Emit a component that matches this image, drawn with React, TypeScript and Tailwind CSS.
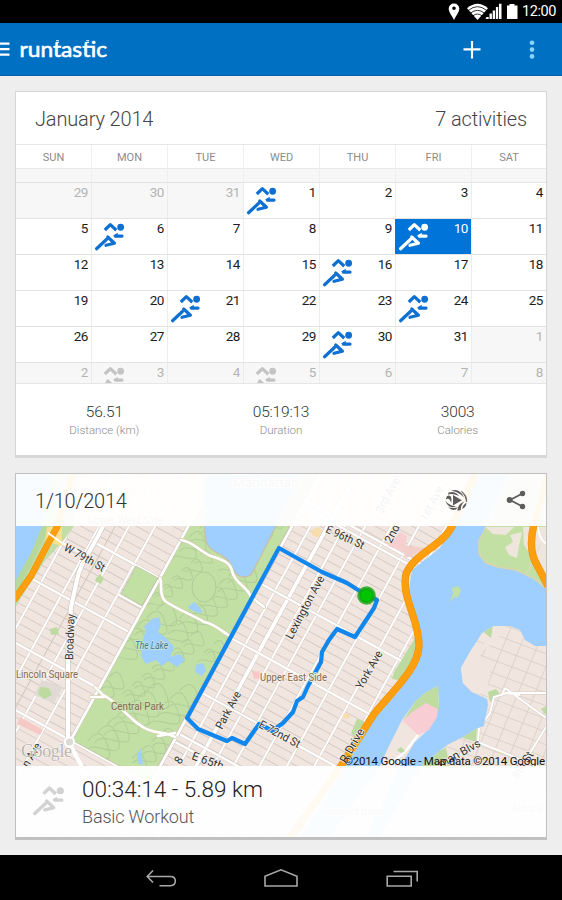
import React from "react";

const DAY_NAMES = ["SUN", "MON", "TUE", "WED", "THU", "FRI", "SAT"];

type Day = { n: number; out?: boolean; run?: boolean; selected?: boolean };

const RUN_DAYS = [1, 6, 10, 16, 21, 24, 30];

const DAYS: Day[] = Array.from({ length: 42 }, (_, i) => {
  const d = i - 2;
  if (d < 1) return { n: 31 + d, out: true };
  if (d > 31) return { n: d - 31, out: true, run: d === 34 || d === 36 };
  return { n: d, run: RUN_DAYS.includes(d), selected: d === 10 };
});

const WEEKS = [0, 1, 2, 3, 4, 5].map((w) => DAYS.slice(w * 7, w * 7 + 7));

function Runner({ className }: { className?: string }) {
  return (
    <svg viewBox="1 0.500 33 33" className={className} fill="none" stroke="currentColor" strokeWidth="3.1" strokeLinecap="round" strokeLinejoin="round">
      <circle cx="28.8" cy="8.5" r="3.3" fill="currentColor" stroke="none" />
      <path d="M13.400 11.200L18.800 6L24.600 11.400" strokeLinecap="butt" />
      <path d="M23.600 17.100H30.200" strokeWidth="3" />
      <path d="M26 13.800L21.400 16.800L26 18.500Z" fill="currentColor" stroke="none" />
      <path d="M5.400 29.400L15 20.400" />
      <path d="M16.200 18L22.800 24L14.600 26" />
    </svg>
  );
}

function StatusBar() {
  return (
    <div className="flex h-[23px] items-center justify-end bg-black pr-[5px] text-white">
      <svg width="70" height="18" viewBox="448 3 70 18" fill="currentColor">
        <path fillRule="evenodd" d="M454 3.4a5.2 5.2 0 0 0-5.3 5.2c0 3.8 3.5 7.4 5.3 11.4 1.8-4 5.3-7.6 5.3-11.4A5.2 5.2 0 0 0 454 3.4Zm0 3a1.8 1.8 0 1 1 0 3.6 1.8 1.8 0 0 1 0-3.6Z" />
        <path d="M467 8.2Q477.500 -.8 488 8.200L477.500 20Z" />
        <g stroke="#000" strokeWidth="0.800" fill="none">
          <path d="M468.500 10.300Q477.500 3 486.500 10.300" />
          <path d="M470.500 13.100Q477.500 7.600 484.500 13.100" />
          <path d="M473 15.800Q477.500 12.200 482 15.800" />
        </g>
        <path d="M486.500 17h2.200v2H485.500ZM489.500 13.500h2.400V19h-2.400ZM492.700 10.500h2.400V19h-2.400ZM495.900 7h2.300V19h-2.300ZM499 3.800h2.500V19H499Z" />
        <path d="M507 5.500h2.500V4h5v1.500h3V19H507Z" />
      </svg>
      <span className="ml-[4px] w-[35px] whitespace-nowrap pt-[1px] text-[14.500px] leading-[22px] tracking-[-0.400px]">12:00</span>
    </div>
  );
}

function AppBar() {
  return (
    <header className="flex h-[53px] items-center border-b border-[#0a5fa6] bg-[#0070c3] text-white">
      <svg width="10" height="16" viewBox="0 0 10 16" fill="#fff">
        <path d="M0 1.500h9.500v2.200H0ZM0 7h9.500v2.200H0ZM0 12.500h9.500v2.200H0Z" />
      </svg>
      <svg width="98" height="28" viewBox="10 36 98 28" fill="#fff">
        <text x="19.500" y="58.300" textLength="87.500" lengthAdjust="spacingAndGlyphs" fontFamily="Lato, sans-serif" fontSize="21" stroke="#fff" strokeWidth="0.600">runtastic</text>
        <path d="M56 41.200h3v1h-3ZM55.800 43h3v1h-3ZM86.200 41.200h3v1h-3ZM86 43h3v1h-3Z" />
      </svg>
      <div className="flex-1" />
      <svg width="90" height="30" viewBox="460 35 90 30">
        <path d="M463.500 50.400h17M472 42v17.500" stroke="#fff" strokeWidth="2.100" />
        <g fill="#8ad4fa">
          <circle cx="532" cy="43.800" r="2.300" />
          <circle cx="532" cy="50.600" r="2.300" />
          <circle cx="532" cy="57.400" r="2.300" />
        </g>
      </svg>
      <div className="w-3" />
    </header>
  );
}

function DayCell({ day, last }: { day: Day; last: boolean }) {
  const tone = day.selected
    ? "-ml-px pl-px bg-[#0074d9] text-white"
    : day.out
      ? "bg-[#f7f7f7] text-[#b4b4b4]"
      : "bg-white text-[#1c1c1c]";
  const icon = day.selected ? "text-white" : day.out ? "text-[#c4c4c4]" : "text-[#0f70d2]";
  return (
    <div className={`flex h-full justify-between ${last ? "pr-[3px]" : "border-r border-[#ececec] pr-[3px]"} ${tone}`}>
      <div className="h-[34px] w-[34px]">{day.run && <Runner className={`h-[34px] w-[34px] ${icon}`} />}</div>
      <span className="text-[13.500px] leading-[19px] tracking-[-0.400px]">{day.n}</span>
    </div>
  );
}

const COLS = "grid grid-cols-[76px_76px_76px_76px_76px_76px_74px]";

function CalendarCard() {
  const stats = [
    ["56.51", "Distance (km)"],
    ["05:19:13", "Duration"],
    ["3003", "Calories"],
  ];
  return (
    <section className="h-[367px] border border-b-[3px] border-[#d6d6d6] bg-white">
      <div className="flex h-[52px] items-center justify-between px-[19px] pt-[2px] text-[20px] font-light tracking-[-0.150px] text-[#444]">
        <span>January 2014</span>
        <span>7 activities</span>
      </div>
      <div className={`${COLS} h-[24px] border-t border-[#e6e6e6]`}>
        {DAY_NAMES.map((d, i) => (
          <div key={d} className={`text-center text-[11px] leading-[25px] text-[#8c8c8c] ${i < 6 ? "border-r border-[#efefef]" : ""}`}>{d}</div>
        ))}
      </div>
      <div className={`${COLS} h-[14px] border-t border-[#e9e9e9] bg-[#f7f7f7]`}>
        {DAY_NAMES.map((d, i) => (
          <div key={d} className={i < 6 ? "border-r border-[#efefef]" : ""} />
        ))}
      </div>
      <div className="h-[202px] overflow-hidden border-b border-[#e6e6e6]">
        {WEEKS.map((w, i) => (
          <div key={i} className={`${COLS} h-[36px] border-t border-[#e3e3e3]`}>
            {w.map((d, j) => (
              <DayCell key={j} day={d} last={j === 6} />
            ))}
          </div>
        ))}
      </div>
      <div className="grid grid-cols-3 pt-[18px] text-center font-light">
        {stats.map(([v, l]) => (
          <div key={l}>
            <div className="text-[15.500px] leading-[20px] tracking-[-0.200px] text-[#333]">{v}</div>
            <div className="text-[11.500px] leading-[16px] text-[#8c8c8c]">{l}</div>
          </div>
        ))}
      </div>
    </section>
  );
}

// Street grid, measured in a frame turned so that the avenues are vertical.
const GRID = "translate(279 548) rotate(28.8)";
const AVENUES = [17, 47, 65, 88, 112, 136, 158];
const WEST_AVENUES = [-119, -142, -168, -192, -216];

// Footpaths of the park: a repeatable scatter of small loops.
const LOOPS = Array.from({ length: 64 }, (_, i) => {
  const u = (i * 0.618034) % 1;
  const v = (i * 0.754877) % 1;
  const r = 5 + ((i * 7) % 8);
  const x = -86 + u * 82;
  const y = -45 + v * 310;
  return `M${x - r} ${y}q${r * 0.3} ${-r * 1.6} ${r * 1.4} ${-r * 0.7}t${r * 0.7} ${r * 1.2}t${-r * 1.3} ${r * 0.5}t${-r} ${r * 0.9}`;
});

function lines(from: number, to: number, step: number, make: (v: number) => string) {
  let d = "";
  for (let v = from; v < to; v += step) d += make(v);
  return d;
}

const ALL_AVENUES = WEST_AVENUES.map((x) => `M${x} -120V400`).join("") + AVENUES.map((x) => `M${x} -140V400`).join("");

const CROSS_STREETS =
  "M2 -54H160M2 -48H160M2 40H190M2 102H190M2 164H190M2 211H190M2 220H190M-168 84H-89M-119 118H-89M-230 146H-89M-240 210H-89M-240 269H190";

function CityMap() {
  return (
    <svg className="absolute inset-0 h-full w-full" viewBox="16 474 530 363" fontFamily="Roboto, sans-serif">
      <defs>
        <clipPath id="park"><path d="M-89 -100H-1V268H-89Z" /></clipPath>
        <clipPath id="astoria">
          <path d="M546 646L535 646L525 640L520 630L510 626H494L482 633L470 652L461 668L463 683L472 692L487 699L488 705L486 715L484 726L476 729L463 737L447 745L436 754L420 767L380 837H546Z" />
        </clipPath>
      </defs>
      <rect x="16" y="474" width="530" height="363" fill="#f1e6df" />

      <g transform={GRID} fill="none">
        <path d={lines(-119.5, 420, 8.86, (y) => `M-280 ${y + 0.8}H-91M2 ${y + 0.8}H200`)} stroke="#d4c9c2" strokeWidth="0.900" />
        <path d="M-280 269H200V460H-280Z" fill="#f1e6df" />
        <path d={lines(275, 420, 9, (y) => `M-280 ${y}H200`)} stroke="#d8cec8" />
        <path d={ALL_AVENUES} stroke="#d6cbc4" strokeWidth="3" />
        <path d={ALL_AVENUES} stroke="#fff" strokeWidth="2.100" />
        <path d="M-154 -120V400M-205 -120V400" stroke="#cfc5be" strokeWidth="0.900" />
        <path d="M32.300 -140V400" stroke="#cfc4bc" strokeWidth="4.800" />
        <path d="M32.300 -140V400" stroke="#fff" strokeWidth="3.800" />
        <path d={CROSS_STREETS} stroke="#d6cbc4" strokeWidth="3.400" />
        <path d={CROSS_STREETS} stroke="#fff" strokeWidth="2.400" />
      </g>

      {/* Hudson, shoreline park and the West Side highway */}
      <path d="M16 474H66L56 527L40 560L16 606Z" fill="#b7d89c" />
      <path d="M16 606L26 590L44 562L64 540L74 526L80 474H60L50 527L34 560L16 594Z" fill="#c3dda9" />
      <path d="M16 474H52L42 527L31 553L16 580Z" fill="#9fcffe" />
      <path d="M45 541L47 527H62L62 546Z" fill="#fadf8e" />
      <path d="M73 474L57 527L43 553L31 576L14 600" fill="none" stroke="#ee920c" strokeWidth="6.600" />
      <path d="M73 474L57 527L43 553L31 576L14 600" fill="none" stroke="#fd9f0e" strokeWidth="5.400" />
      <path d="M48 533L62 543L80 552" fill="none" stroke="#fff" strokeWidth="2" />

      {/* Central Park */}
      <g transform={GRID}>
        <path d="M-89 -120H-1V268H-89Z" fill="#c2dfa4" stroke="#c7b8a5" strokeWidth="0.700" />
        <g clipPath="url(#park)" fill="none" stroke="#b1ce98" strokeWidth="1">
          {LOOPS.map((d, i) => <path key={i} d={d} />)}
        </g>
        <path d="M-90 -120V269M1 -120V400" stroke="#d0c5bd" strokeWidth="3.800" />
        <path d="M-90 -120V269M1 -120V400" stroke="#fff" strokeWidth="2.700" />
      </g>
      <ellipse cx="204" cy="587" rx="12" ry="15" fill="#c2dfa4" stroke="#afcc96" />
      <path d="M204 474V526C206 537 204 545 214 551C223 556 230 560 232 567C236 577 243 579 251 575L264 550L302 474Z" fill="#9fcffe" stroke="#c9bea0" strokeWidth="1.200" />
      <path d="M152 619L159 617L161 625L158 632L166 638L174 647L170 657L180 654L185 660L177 667L168 661L162 666L156 660L146 664L141 656L143 640L146 630L144 627Z" fill="#9fcffe" />
      <path d="M188 607L194 602L201 609L202 613L195 612Z M196 665L203 663L206 670L202 676L195 672Z M137 755L141 748L143 765L138 763Z" fill="#9fcffe" />
      <g fill="none" strokeLinecap="round">
        <path d="M181 540C194 542 199 551 211 556C223 560 230 562 232 571C235 584 247 586 251 597L264 607M160 578C163 584 158 593 165 601C178 610 193 615 204 622C216 624 222 632 230 636M95 687L103 695C120 703 132 724 149 730C160 734 166 732 175 737M91 697L104 697M158 736L175 733" stroke="#d2ccae" strokeWidth="3.800" />
        <path d="M181 540C194 542 199 551 211 556C223 560 230 562 232 571C235 584 247 586 251 597L264 607M160 578C163 584 158 593 165 601C178 610 193 615 204 622C216 624 222 632 230 636M95 687L103 695C120 703 132 724 149 730C160 734 166 732 175 737M91 697L104 697M158 736L175 733" stroke="#fff" strokeWidth="2.700" />
      </g>
      <path d="M136 566L158 578L142 606L121 594Z" fill="#c2dfa4" stroke="#b4a996" strokeWidth="0.500" />
      <path d="M96 578L100 574L104 578L101 584L95 581Z M50 629L57 627L59 634L51 635Z" fill="#bddba0" />
      <path d="M42 680L63 687L54 703L34 695Z" fill="#dfdbd4" />
      <path d="M40 687L49 688L52 695L44 699L38 694Z" fill="#bddba0" />
      <path d="M20 717L43 730L40 735L17 724Z" fill="#f6c9c7" />
      <path d="M103 526C94 547 80 562 77 580L71 607L68 656L68 741" fill="none" stroke="#cfc4bc" strokeWidth="5.400" />
      <path d="M112 474L103 526C94 547 80 562 77 580L71 607L68 656L68 741L100 800" fill="none" stroke="#fff" strokeWidth="4.200" />
      <circle cx="69.500" cy="742" r="4.600" fill="#ddd9d5" stroke="#fff" strokeWidth="2" />
      <path d="M392 540L401 532L407 536L404 552L388 546Z" fill="#f8cfd0" />
      <path d="M402 545L426 548L412 556L405 558Z" fill="#f3cfc9" />
      <path d="M312 530L318 527L322 530L319 538L312 535Z M343 714L348 713L350 718L344 719Z" fill="#f8ddae" />
      <path d="M252 672L259 671L262 678L254 679Z" fill="#f6c9c7" />

      {/* East River */}
      <path d="M478 474L453 527L440 548L412 570L408 595L419 628L420 655L400 690L376 717L346 766L300 837H546V474Z" fill="#9fcffe" />
      <path d="M415 638L410 646L404 656L394 672L392 679L400 680L415 660Z M357 719L364 721L365 734L357 740L351 733Z" fill="#bddba0" />

      {/* Wards Island */}
      <path d="M510 474L486 527L479 541L479 554L486 563L498 567L516 570L533 578L546 588V474Z" fill="#c2dfa4" stroke="#d9d5ae" strokeWidth="1.500" />
      <path d="M485 527H514L506 535L493 534Z M510 535L522 532L519 546L517 558L509 555L505 547L513 542Z M523 527H546V580L535 562L524 545Z" fill="#eee5dd" />
      <path d="M540 545L533 560L526 575" fill="none" stroke="#e3d9cc" />
      <path d="M534 524C530 540 531 555 537 565L548 586" fill="none" stroke="#ee920c" strokeWidth="7.400" />
      <path d="M548 474L534 524C530 540 531 555 537 565L548 586" fill="none" stroke="#fd9f0e" strokeWidth="6.200" />
      <path d="M538 527Q539 540 547 544" fill="none" stroke="#fff" strokeWidth="2" />
      <path d="M452 588L458 586L461 590L458 597L453 598L449 603L453 594Z" fill="#c2dfa4" />

      {/* Roosevelt Island */}
      <path d="M438 686L439 706L429 729L415 742L407 755L400 766L366 837H330L380 766L387 750L402 720L415 702L425 693Z" fill="#f1e6df" />
      <path d="M438 686L439 710L426 704L411 714L402 722L415 702L425 693Z" fill="#bfdda1" />
      <path d="M426 703L438 709L437 717L429 730L418 735L403 721L412 712Z" fill="#f8ced4" />
      <path d="M418 735L405 752L385 768" fill="none" stroke="#fff" strokeWidth="2.400" />
      <path d="M397 750L401 747L405 751L401 753Z" fill="#bddba0" />

      {/* Astoria */}
      <g clipPath="url(#astoria)">
        <path d="M340 600H560V840H340Z" fill="#f1e6df" />
        <path d={lines(450, 640, 17, (x) => `M${x + 30} 620L${x - 60} 840`) + lines(560, 830, 13, (y) => `M400 ${y}L560 ${y + 60}`)} fill="none" stroke="#dad0c9" strokeWidth="0.900" />
        <path d="M458 640L474 645L490 672L486 695L460 690Z M484 620L505 620L500 636L484 650Z" fill="#f1e6df" />
        <path d="M482 631L493 625L491 638Z M488 692L496 689L500 694L490 702Z M477 727L460 737L476 742Z M446 748L430 755L420 767H450Z M541 709L546 706V715Z" fill="#bddba0" />
        <path d="M546 693H507L494 697L490 713L479 728L478 742M505 688L546 718M505 688L502 695M505 693L520 695M546 727L533 748L500 800M478 742L546 770" fill="none" stroke="#d3c9c2" strokeWidth="2.900" />
        <path d="M546 693H507L494 697L490 713L479 728L478 742M505 688L546 718M505 688L502 695M505 693L520 695M546 727L533 748L500 800M478 742L546 770" fill="none" stroke="#fff" strokeWidth="2.100" />
      </g>

      {/* FDR Drive */}
      <path d="M475 474L453 524C444 546 415 552 406 574C401 598 419 618 419 646C418 668 394 690 374 714L341 766L291 837" fill="none" stroke="#ee920c" strokeWidth="7.400" />
      <path d="M475 474L453 524C444 546 415 552 406 574C401 598 419 618 419 646C418 668 394 690 374 714L341 766L291 837" fill="none" stroke="#fd9f0e" strokeWidth="6.200" />

      {/* Recorded route */}
      <path d="M366 595L377 600L374 608L355 637L337 629L329 640L322 652L321 662L308 686L303 697L297 701L293 712L283 723L272 731L269 729L259 724L245 744L232 738L227 741L198 729L187 718L279 548L322 572L347 583Z" fill="none" stroke="#1187ee" strokeWidth="4.200" strokeLinejoin="round" />

      {/* Place and street names */}
      <g fontSize="11.500" fill="#333" stroke="#f6efe9" strokeWidth="1.600" strokeLinejoin="round" paintOrder="stroke">
        <text transform="translate(63 550) rotate(29)" textLength="45" lengthAdjust="spacingAndGlyphs">W 79th St</text>
        <text transform="translate(73 660) rotate(-88)" textLength="46" lengthAdjust="spacingAndGlyphs">Broadway</text>
        <text transform="translate(292 640) rotate(-62)" textLength="70" lengthAdjust="spacingAndGlyphs">Lexington Ave</text>
        <text transform="translate(325 532) rotate(25)" textLength="41" lengthAdjust="spacingAndGlyphs">E 96th St</text>
        <text transform="translate(391 544) rotate(-62)">2nd</text>
        <text transform="translate(362 690) rotate(-60)" textLength="42" lengthAdjust="spacingAndGlyphs">York Ave</text>
        <text transform="translate(222 730) rotate(-62)" textLength="41" lengthAdjust="spacingAndGlyphs">Park Ave</text>
        <text transform="translate(258 727) rotate(28)" textLength="45" lengthAdjust="spacingAndGlyphs">E 72nd St</text>
        <text transform="translate(191 759) rotate(20)" textLength="33" lengthAdjust="spacingAndGlyphs">E 65th</text>
        <text transform="translate(28 768) rotate(-58)" textLength="26" lengthAdjust="spacingAndGlyphs">n Ave</text>
        <text transform="translate(346 764) rotate(-60)" textLength="38" lengthAdjust="spacingAndGlyphs">R Drive</text>
        <text transform="translate(441 768) rotate(-29)" textLength="46" lengthAdjust="spacingAndGlyphs">man Blvs</text>
        <text transform="translate(518 780) rotate(-58)">8th St</text>
        <text transform="translate(180 765) rotate(-55)">8</text>
        <text transform="translate(382 514) rotate(-62)">3rd Ave</text>
        <text transform="translate(426 522) rotate(-62)">1st Ave</text>
      </g>
      <g fontSize="10.500" fill="#85694f" stroke="#f6efe9" strokeWidth="1.800" paintOrder="stroke">
        <text x="16" y="678" textLength="62" lengthAdjust="spacingAndGlyphs">Lincoln Square</text>
        <text x="260" y="681" textLength="67" lengthAdjust="spacingAndGlyphs">Upper East Side</text>
        <text x="111" y="710" textLength="53" lengthAdjust="spacingAndGlyphs" stroke="#cbe3b0">Central Park</text>
        <text x="233" y="487" textLength="66" fontSize="13.500" fill="#777">Manhattan</text>
        <text x="88" y="524" textLength="75">Upper West Side</text>
        <text x="323" y="815" textLength="60" lengthAdjust="spacingAndGlyphs" fill="#777">Roosevelt Island</text>
        <text x="511" y="812" textLength="32" fill="#777">Astoria</text>
      </g>
      <text x="135" y="649" fontSize="10" fontStyle="italic" textLength="33" lengthAdjust="spacingAndGlyphs" fill="#39799b" stroke="#c8e6d6" strokeWidth="1.500" paintOrder="stroke">The Lake</text>
      <text x="21" y="757" fontFamily="Liberation Serif, serif" fontSize="18" textLength="51" fill="#bdb5ae" stroke="#fff" strokeWidth="0.800" paintOrder="stroke">Google</text>
      <circle cx="366.500" cy="595.500" r="9.300" fill="#1fa31f" opacity="0.850" />
      <circle cx="366.500" cy="595.500" r="7.200" fill="#0fa80f" />
      <circle cx="366.500" cy="595.500" r="5.800" fill="#00c400" />
      <text x="344" y="764.500" fontSize="11.500" textLength="201" fill="#111">©2014 Google - Map data ©2014 Google</text>
    </svg>
  );
}

function StoryIcon() {
  return (
    <svg width="24" height="24" viewBox="0 0 24 24" fill="#5c5c5c">
      <path d="M9 7L17.800 12.300L9 17.600Z" />
      <path d="M7 2.700Q16 -.3 20 9.500Q15 3.800 7 2.700Z" />
      <path d="M17.500 3.300Q23.500 7.500 22.600 14Q22 8 17.500 3.300Z" stroke="#5c5c5c" strokeWidth="0.700" />
      <path d="M4.500 4.500Q11 2.500 15 8Q9 5.200 4 6.500Z" />
      <path d="M2.800 8.200Q8.500 5.500 7.200 15Q5.500 9 1.800 11.500Z" />
      <path d="M1.200 12.800Q5 17.500 12 18.500Q5 21.500 1.200 12.800Z" />
      <path d="M4.200 19.300Q9 20.500 14 19.500Q10 24.500 4.200 19.300Z" />
      <path d="M13.500 22.800Q13.500 16 20.500 13.500Q16.500 17 16.800 22Z" />
      <path d="M18.300 21Q18.500 17 22.500 14.800Q22.500 18.500 18.300 21Z" />
    </svg>
  );
}

function ShareIcon() {
  return (
    <svg width="20" height="20" viewBox="0 0 20 20" fill="#5c5c5c" stroke="#5c5c5c">
      <path d="M16.500 3.500L4 10L16.500 16.500" fill="none" strokeWidth="1.800" />
      <circle cx="16.500" cy="3.500" r="2.700" stroke="none" />
      <circle cx="3.600" cy="10" r="2.900" stroke="none" />
      <circle cx="16.500" cy="16.500" r="2.700" stroke="none" />
    </svg>
  );
}

function ActivityCard() {
  return (
    <section className="relative flex h-[367px] flex-col justify-between border border-b-[3px] border-[#c0c0c0] bg-white">
      <CityMap />
      <div className="relative flex h-[52px] items-center bg-white/94 pl-[19px] pr-[20px]">
        <span className="flex-1 pt-[2px] text-[20px] font-light tracking-[-0.200px] text-[#333]">1/10/2014</span>
        <StoryIcon />
        <div className="w-[38px]" />
        <ShareIcon />
      </div>
      <div className="relative flex h-[71px] bg-white/95">
        <div className="w-[66px] pl-[14px] pt-[16px]">
          <Runner className="h-[36px] w-[36px] text-[#d2d2d2]" />
        </div>
        <div className="pt-[9px] font-light">
          <div className="text-[22.500px] leading-[28px] text-[#222]">00:34:14 - 5.89 km</div>
          <div className="pt-[1px] text-[18px] leading-[26px] tracking-[-0.150px] text-[#555]">Basic Workout</div>
        </div>
      </div>
    </section>
  );
}

function NavBar() {
  return (
    <nav className="h-[45px] bg-black">
      <svg width="562" height="45" viewBox="0 855 562 45" fill="none" stroke="#a8a8a8" strokeWidth="1.600">
        <path d="M153 870.500L147.200 876.500L153 882.500M148 876.500H170.500Q175.300 876.500 175.300 881T170.500 885.700H159.500" />
        <path d="M265 886V876.300L281 869.800L297 876.300V886Z" />
        <path d="M387.200 876.300H411.200V886H387.200ZM393.500 871.500H417.200V881.500" />
      </svg>
    </nav>
  );
}

export default function App() {
  return (
    <div className="flex h-[900px] w-[562px] flex-col overflow-hidden bg-[#eeeeee] font-['Roboto',sans-serif]">
      <StatusBar />
      <AppBar />
      <main className="flex flex-1 flex-col gap-[15px] px-[15px] pt-[15px]">
        <CalendarCard />
        <ActivityCard />
      </main>
      <NavBar />
    </div>
  );
}
